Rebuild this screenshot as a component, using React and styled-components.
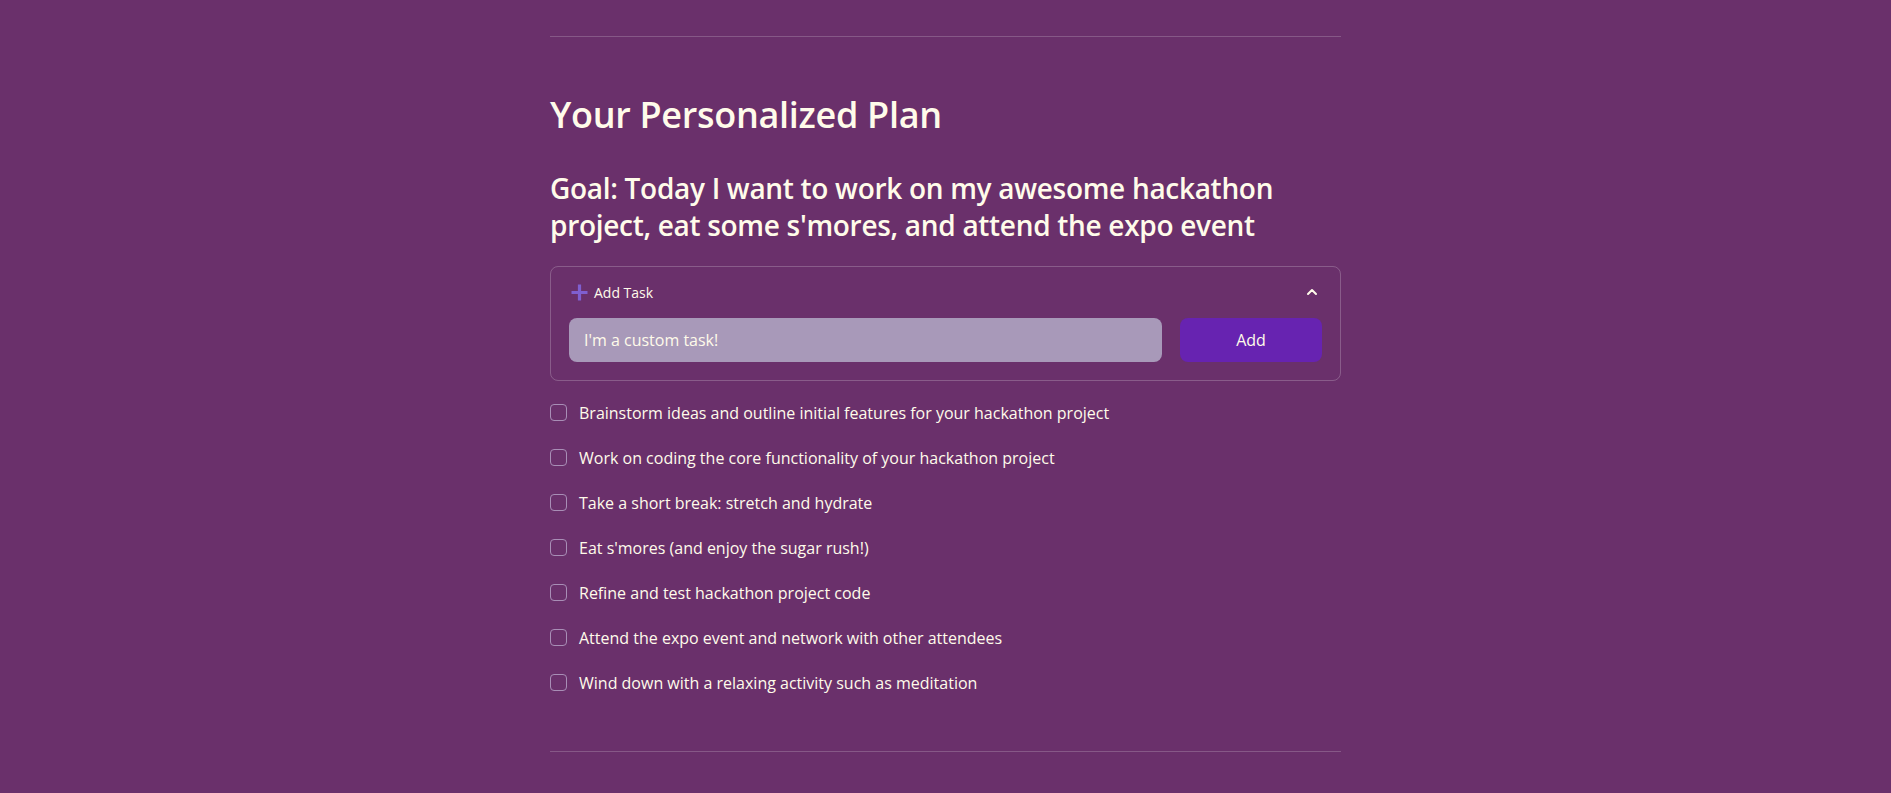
import React, { useState } from "react";
import styled, { createGlobalStyle } from "styled-components";

const GlobalStyle = createGlobalStyle`
  html, body {
    margin: 0;
    padding: 0;
    background: #6a306b;
  }
  body {
    font-family: "Open Sans", "Noto Sans", sans-serif;
    color: #fffbea;
  }
`;

const Page = styled.div`
  min-height: 793px;
  background: #6a306b;
  padding-top: 36px;
  box-sizing: border-box;
`;

const Column = styled.main`
  width: 791px;
  margin: 0 auto;
  display: flex;
  flex-direction: column;
`;

const Rule = styled.hr`
  margin: 0;
  border: none;
  height: 1px;
  background: rgba(250, 250, 250, 0.2);
`;

const Title = styled.h2`
  margin: 56px 0 0;
  font-size: 36px;
  line-height: 43px;
  font-weight: 600;
  letter-spacing: -0.3px;
`;

const Goal = styled.h3`
  margin: 34px 0 0;
  font-size: 28px;
  line-height: 37.4px;
  font-weight: 600;
  letter-spacing: -0.3px;
`;

const Expander = styled.section`
  margin-top: 21px;
  border: 1px solid rgba(250, 250, 250, 0.22);
  border-radius: 8px;
`;

const ExpanderHeader = styled.div`
  height: 51px;
  padding: 0 22px 0 18px;
  display: flex;
  align-items: center;
  font-size: 14px;
  cursor: pointer;
`;

const HeaderLabel = styled.span`
  flex: 1;
  display: flex;
  align-items: center;
  gap: 5px;
`;

const ExpanderBody = styled.div`
  padding: 0 18px 18px;
  display: flex;
  gap: 18px;
`;

const TaskInput = styled.input`
  flex: 1;
  height: 44px;
  box-sizing: border-box;
  border: none;
  border-radius: 8px;
  background: #a899b9;
  color: #fffbea;
  font-family: inherit;
  font-size: 16px;
  padding: 0 15px;
  outline: none;
`;

const AddButton = styled.button`
  width: 142px;
  height: 44px;
  border: none;
  border-radius: 8px;
  background: #6723b1;
  color: #fffbea;
  font-family: inherit;
  font-size: 16px;
  cursor: pointer;
`;

const TaskList = styled.ul`
  list-style: none;
  margin: 20px 0 0;
  padding: 0;
  display: flex;
  flex-direction: column;
  gap: 21px;
`;

const TaskRow = styled.li`
  display: flex;
  align-items: center;
  gap: 12px;
  font-size: 16px;
  line-height: 24px;
  cursor: pointer;
`;

const Box = styled.span`
  width: 17px;
  height: 17px;
  box-sizing: border-box;
  border: 1px solid ${(p) => (p.checked ? "#6723b1" : "#a88eb6")};
  background: ${(p) => (p.checked ? "#6723b1" : "transparent")};
  border-radius: 4px;
  flex-shrink: 0;
`;

const BottomRule = styled(Rule)`
  margin-top: 56px;
`;

const tasks = [
  "Brainstorm ideas and outline initial features for your hackathon project",
  "Work on coding the core functionality of your hackathon project",
  "Take a short break: stretch and hydrate",
  "Eat s'mores (and enjoy the sugar rush!)",
  "Refine and test hackathon project code",
  "Attend the expo event and network with other attendees",
  "Wind down with a relaxing activity such as meditation",
];

const PlusIcon = () => (
  <svg width="20" height="20" viewBox="0 0 20 20">
    <path
      d="M10.5 2.5v16M2.5 10.5h16"
      stroke="#7f5fd0"
      strokeWidth="3.2"
      fill="none"
    />
  </svg>
);

const ChevronUp = () => (
  <svg width="12" height="12" viewBox="0 0 12 12">
    <path
      d="M2 8l4-4 4 4"
      stroke="#fffbea"
      strokeWidth="2"
      fill="none"
      strokeLinecap="round"
      strokeLinejoin="round"
    />
  </svg>
);

const App = () => {
  const [done, setDone] = useState({});

  return (
    <Page>
      <GlobalStyle />
      <Column>
        <Rule />
        <Title>Your Personalized Plan</Title>
        <Goal>
          Goal: Today I want to work on my awesome hackathon project, eat some
          s'mores, and attend the expo event
        </Goal>
        <Expander>
          <ExpanderHeader>
            <HeaderLabel>
              <PlusIcon />
              Add Task
            </HeaderLabel>
            <ChevronUp />
          </ExpanderHeader>
          <ExpanderBody>
            <TaskInput defaultValue="I'm a custom task!" />
            <AddButton>Add</AddButton>
          </ExpanderBody>
        </Expander>
        <TaskList>
          {tasks.map((t, i) => (
            <TaskRow key={i} onClick={() => setDone({ ...done, [i]: !done[i] })}>
              <Box checked={done[i]} />
              {t}
            </TaskRow>
          ))}
        </TaskList>
        <BottomRule />
      </Column>
    </Page>
  );
};

export default App;
